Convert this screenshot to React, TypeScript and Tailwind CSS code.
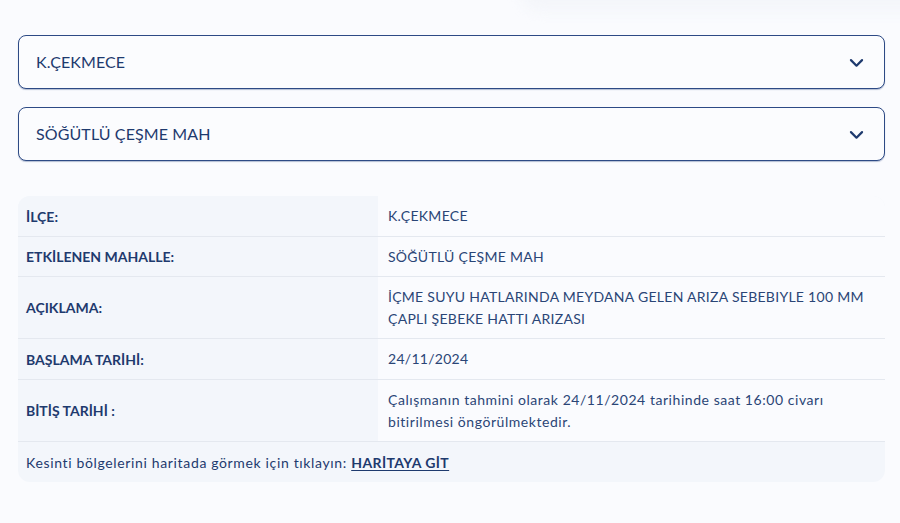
import React from "react";

const Chevron = () => (
  <svg width="19" height="19" viewBox="0 0 24 24" fill="none" stroke="#1e3a6e" strokeWidth="2.8" strokeLinecap="round" strokeLinejoin="round">
    <path d="M5 9l7 7 7-7" />
  </svg>
);

const Select = ({ label }: { label: string }) => (
  <div className="flex h-[54px] items-center justify-between rounded-lg border-[1.5px] border-[#2d4a85] bg-[#fbfcfe] pl-[17px] pr-[18px] shadow-[0_1px_1px_rgba(45,74,133,0.35)]">
    <span className="text-[16px] tracking-[0.1px] text-[#1e3a6e]">{label}</span>
    <Chevron />
  </div>
);

const rows: { label: string; value: React.ReactNode; h: string; lower?: boolean }[] = [
  { label: "İLÇE:", value: "K.ÇEKMECE", h: "h-[40px]" },
  { label: "ETKİLENEN MAHALLE:", value: "SÖĞÜTLÜ ÇEŞME MAH", h: "h-[39px]" },
  {
    label: "AÇIKLAMA:",
    value: "İÇME SUYU HATLARINDA MEYDANA GELEN ARIZA SEBEBIYLE 100 MM ÇAPLI ŞEBEKE HATTI ARIZASI",
    h: "h-[61px]",
  },
  { label: "BAŞLAMA TARİHİ:", value: "24/11/2024", h: "h-[40px]" },
  {
    label: "BİTİŞ TARİHİ :",
    value: "Çalışmanın tahmini olarak 24/11/2024 tarihinde saat 16:00 civarı bitirilmesi öngörülmektedir.",
    h: "h-[61px]",
    lower: true,
  },
];

export default function App() {
  return (
    <div
      className="relative h-[523px] w-[900px] overflow-hidden bg-[#fafbfe] pl-[18px] pr-[15px] pt-[35px]"
      style={{ fontFamily: "Lato, 'Noto Sans', sans-serif" }}
    >
      <div className="absolute right-[-40px] top-[-30px] h-[42px] w-[420px] rounded-full bg-[#f4f6fa] blur-[6px]" />
      <div className="relative flex flex-col gap-[18px]">
        <Select label="K.ÇEKMECE" />
        <Select label="SÖĞÜTLÜ ÇEŞME MAH" />
      </div>
      <div className="relative mt-[35px] overflow-hidden rounded-[12px] bg-[#f3f6fb]">
        {rows.map((r, i) => (
          <div key={i} className="flex border-b border-[#e4e8ef]">
            <div
              className={`flex w-[360px] shrink-0 items-center bg-[#f3f6fb] pl-[8px] text-[14px] font-bold text-[#1e3a6e] ${r.h}`}
            >
              {r.label}
            </div>
            <div
              className={`flex flex-1 items-center bg-[#fafbfe] pl-[10px] pr-[14px] text-[14px] leading-[22px] text-[#2a4576] ${
                r.lower ? "tracking-[0.55px]" : "tracking-[0.28px]"
              }`}
            >
              <span className={r.lower ? "max-w-[440px]" : "max-w-[490px]"}>{r.value}</span>
            </div>
          </div>
        ))}
        <div className="flex h-[40px] items-center pl-[8px] text-[14px] text-[#1e3a6e]">
          <span className="tracking-[0.65px]">Kesinti bölgelerini haritada görmek için tıklayın:&nbsp;</span>
          <a className="font-bold tracking-[0.4px] underline underline-offset-2">HARİTAYA GİT</a>
        </div>
      </div>
    </div>
  );
}
